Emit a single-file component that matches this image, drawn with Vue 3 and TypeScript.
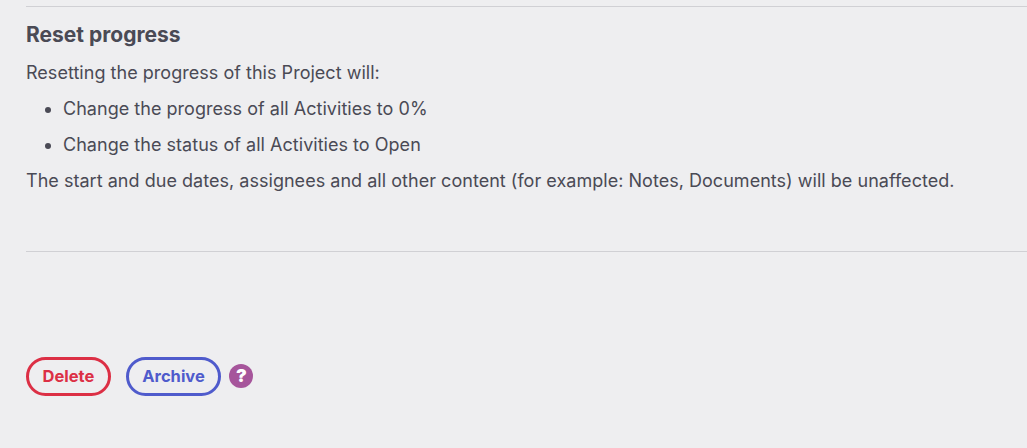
<template>
  <div class="page">
    <section class="reset">
      <h3 class="title">Reset progress</h3>
      <p class="text">Resetting the progress of this Project will:</p>
      <ul class="list">
        <li v-for="item in effects" :key="item">{{ item }}</li>
      </ul>
      <p class="text">The start and due dates, assignees and all other content (for example: Notes, Documents) will be unaffected.</p>
    </section>
    <div class="actions">
      <button class="btn btn-delete" type="button">Delete</button>
      <button class="btn btn-archive" type="button">Archive</button>
      <span class="help">?</span>
    </div>
  </div>
</template>

<script setup lang="ts">
const effects: string[] = [
  'Change the progress of all Activities to 0%',
  'Change the status of all Activities to Open'
]
</script>

<style>
html,
body {
  margin: 0;
  background: #eeeef0;
}
</style>

<style scoped>
.page {
  height: 448px;
  box-sizing: border-box;
  padding: 6px 0 0 26px;
  background: #eeeef0;
  font-family: Inter, sans-serif;
  font-optical-sizing: none;
  color: #4a4a55;
  overflow: hidden;
}

.reset {
  height: 246px;
  box-sizing: border-box;
  border-top: 1px solid #d0d0d4;
  border-bottom: 1px solid #d0d0d4;
  padding-top: 15px;
}

.title {
  margin: 0 0 13px;
  font-size: 21px;
  line-height: 26px;
  font-weight: 700;
}

.text {
  margin: 0;
  font-size: 18px;
  line-height: 24px;
  letter-spacing: 0.03px;
}

.list {
  margin: 12px 0;
  padding-left: 37px;
  font-size: 18px;
  line-height: 24px;
  letter-spacing: 0.03px;
}

.list li + li {
  margin-top: 12px;
}

.actions {
  display: flex;
  align-items: center;
  margin-top: 105px;
}

.btn {
  height: 39px;
  box-sizing: border-box;
  padding: 0 13.5px 1px;
  border-radius: 20px;
  background: transparent;
  font-family: inherit;
  font-optical-sizing: none;
  font-size: 16.5px;
  font-weight: 700;
}

.btn-delete {
  border: 3px solid #dc2f45;
  color: #dc2f45;
  margin-right: 15px;
}

.btn-archive {
  border: 3px solid #4f5bcc;
  color: #4f5bcc;
  margin-right: 8px;
}

.help {
  width: 24px;
  height: 24px;
  margin-bottom: 1px;
  border-radius: 50%;
  background: #a6559b;
  color: #fff;
  font-size: 18px;
  font-weight: 900;
  line-height: 24px;
  text-align: center;
}
</style>
